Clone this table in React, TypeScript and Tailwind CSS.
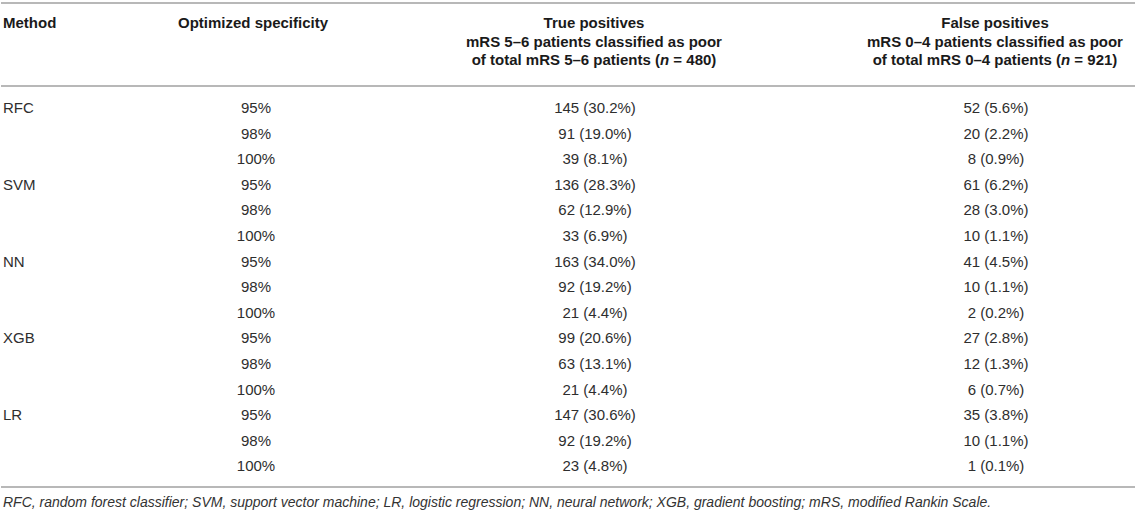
const rows = [
  { method: "RFC", spec: "95%", tp: "145 (30.2%)", fp: "52 (5.6%)" },
  { method: "", spec: "98%", tp: "91 (19.0%)", fp: "20 (2.2%)" },
  { method: "", spec: "100%", tp: "39 (8.1%)", fp: "8 (0.9%)" },
  { method: "SVM", spec: "95%", tp: "136 (28.3%)", fp: "61 (6.2%)" },
  { method: "", spec: "98%", tp: "62 (12.9%)", fp: "28 (3.0%)" },
  { method: "", spec: "100%", tp: "33 (6.9%)", fp: "10 (1.1%)" },
  { method: "NN", spec: "95%", tp: "163 (34.0%)", fp: "41 (4.5%)" },
  { method: "", spec: "98%", tp: "92 (19.2%)", fp: "10 (1.1%)" },
  { method: "", spec: "100%", tp: "21 (4.4%)", fp: "2 (0.2%)" },
  { method: "XGB", spec: "95%", tp: "99 (20.6%)", fp: "27 (2.8%)" },
  { method: "", spec: "98%", tp: "63 (13.1%)", fp: "12 (1.3%)" },
  { method: "", spec: "100%", tp: "21 (4.4%)", fp: "6 (0.7%)" },
  { method: "LR", spec: "95%", tp: "147 (30.6%)", fp: "35 (3.8%)" },
  { method: "", spec: "98%", tp: "92 (19.2%)", fp: "10 (1.1%)" },
  { method: "", spec: "100%", tp: "23 (4.8%)", fp: "1 (0.1%)" },
];

const cols = "grid grid-cols-[172px_166px_512px_1fr]";

export default function App() {
  return (
    <div className="bg-white w-[1143px] h-[513px] pt-[2px] pl-[1px] font-['Liberation_Sans',Arial,sans-serif]">
      <div className="w-[1134px] border-t-2 border-b-2 border-[#b8b8b8]">
        {/* header */}
        <div className={`${cols} pt-[10px] pb-[15px] border-b-2 border-[#b8b8b8] text-[15px] leading-[18.5px] font-bold text-[#1a1a1a]`}>
          <div className="pl-[2px]">Method</div>
          <div className="pl-[5px]">Optimized specificity</div>
          <div className="text-center pr-[2px]">
            <div>True positives</div>
            <div>mRS 5–6 patients classified as poor</div>
            <div>
              of total mRS 5–6 patients (<i>n</i> = 480)
            </div>
          </div>
          <div className="text-center pl-[4px]">
            <div>False positives</div>
            <div>mRS 0–4 patients classified as poor</div>
            <div>
              of total mRS 0–4 patients (<i>n</i> = 921)
            </div>
          </div>
        </div>

        {/* body */}
        <div className="pt-[9px] pb-[7px] text-[15px] text-[#2e2e2e]">
          {rows.map((r, i) => (
            <div key={i} className={`${cols} h-[25.6px] items-center`}>
              <div className="pl-[2px]">{r.method}</div>
              <div className="text-center">{r.spec}</div>
              <div className="text-center">{r.tp}</div>
              <div className="text-center pl-[6px]">{r.fp}</div>
            </div>
          ))}
        </div>
      </div>

      <p className="pl-[2px] pt-[4px] text-[14px] italic text-[#333]">
        RFC, random forest classifier; SVM, support vector machine; LR, logistic regression; NN, neural network; XGB, gradient
        boosting; mRS, modified Rankin Scale.
      </p>
    </div>
  );
}
